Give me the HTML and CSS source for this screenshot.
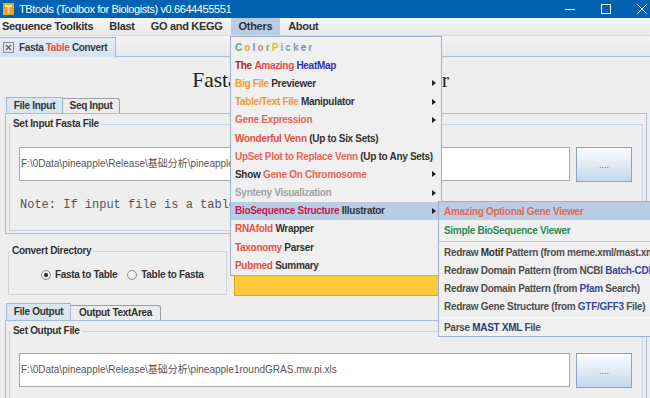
FILE: index.html
```html
<!DOCTYPE html>
<html lang="en">
<head>
  <meta charset="UTF-8" />
  <title>TBtools (Toolbox for Biologists) v0.6644455551</title>
  <link rel="stylesheet" href="styles.css">
</head>
<body>

  <div class="titlebar">
    <svg class="app-icon" width="11" height="12" viewBox="0 0 11 12">
      <rect x="0" y="0" width="11" height="12" fill="#f4a21e"/>
      <rect x="2" y="2" width="7" height="2" fill="#fde3a8"/>
      <rect x="4.5" y="2" width="2" height="8" fill="#fde3a8"/>
    </svg>
    <span class="app-title">TBtools (Toolbox for Biologists) v0.6644455551</span>
    <div class="win-controls">
      <span class="win-btn">
        <svg width="10" height="10" viewBox="0 0 10 10"><line x1="0" y1="5.5" x2="10" y2="5.5" stroke="#fff" stroke-width="1"/></svg>
      </span>
      <span class="win-btn">
        <svg width="10" height="10" viewBox="0 0 10 10"><rect x="0.5" y="0.5" width="9" height="9" fill="none" stroke="#fff" stroke-width="1"/></svg>
      </span>
      <span class="win-btn">
        <svg width="10" height="10" viewBox="0 0 10 10"><path d="M0.5 0.5 L9.5 9.5 M9.5 0.5 L0.5 9.5" stroke="#fff" stroke-width="1"/></svg>
      </span>
    </div>
  </div>

  <nav class="menubar">
    <span class="menu-item first">Sequence Toolkits</span>
    <span class="menu-item">Blast</span>
    <span class="menu-item">GO and KEGG</span>
    <span class="menu-item open">Others</span>
    <span class="menu-item">About</span>
  </nav>

  <div class="doc-tabs">
    <div class="doc-tab">
      <svg class="tab-close" width="11" height="11" viewBox="0 0 11 11">
        <rect x="0.5" y="0.5" width="10" height="10" fill="#e4e4e4" stroke="#8c8c8c"/>
        <path d="M3 3 L8 8 M8 3 L3 8" stroke="#606060" stroke-width="1.2"/>
      </svg>
      <span>Fasta <span class="c-red">Table</span> Convert</span>
    </div>
  </div>

  <main class="content">
    <h1 class="page-title">Fasta Table Format Converter</h1>

    <div class="tabbed">
      <div class="tab-row">
        <span class="tab active tab-input">File Input</span>
        <span class="tab tab-seq">Seq Input</span>
      </div>
      <div class="tab-panel input-panel">
        <fieldset class="titled input-box">
          <legend>Set Input Fasta File</legend>
          <div class="file-row">
            <div class="field">F:\0Data\pineapple\Release\基础分析\pineapple1roundGRAS.mw.pi.fa</div>
            <button class="browse">....</button>
          </div>
          <p class="note">Note: If input file is a table file,</p>
        </fieldset>
      </div>
    </div>

    <div class="convert-row">
      <fieldset class="titled direction">
        <legend>Convert Directory</legend>
        <div class="radios">
          <label class="radio"><span class="dot checked"></span>Fasta to Table</label>
          <label class="radio"><span class="dot"></span>Table to Fasta</label>
        </div>
      </fieldset>
      <div class="convert-btn"></div>
    </div>

    <div class="tabbed output">
      <div class="tab-row">
        <span class="tab active tab-file-out">File Output</span>
        <span class="tab tab-text-out">Output TextArea</span>
      </div>
      <div class="tab-panel output-panel">
        <fieldset class="titled output-box">
          <legend>Set Output File</legend>
          <div class="file-row">
            <div class="field">F:\0Data\pineapple\Release\基础分析\pineapple1roundGRAS.mw.pi.xls</div>
            <button class="browse">....</button>
          </div>
        </fieldset>
      </div>
    </div>
  </main>

  <!-- Others popup -->
  <div class="popup others-menu">
    <div class="pm-item colorpicker">
      <span style="color:#4fa896">C</span><span style="color:#eaa23c">o</span><span style="color:#6c93d2">l</span><span style="color:#e57c8c">o</span><span style="color:#6cb35c">r</span><span style="color:#d6bf38">P</span><span style="color:#c77dc2">i</span><span style="color:#69b0a0">c</span><span style="color:#8592b4">k</span><span style="color:#7d7fc4">e</span><span style="color:#8c9ca8">r</span>
    </div>
    <div class="pm-item"><span class="c-dred">The</span>&nbsp;<span class="c-pink">Amazing</span>&nbsp;<span class="c-blue">HeatMap</span></div>
    <div class="pm-item sub"><span class="c-orange">Big File</span>&nbsp;<span class="c-dark">Previewer</span></div>
    <div class="pm-item sub"><span class="c-orange">Table/Text File</span>&nbsp;<span class="c-dark">Manipulator</span></div>
    <div class="pm-item sub"><span class="c-salmon">Gene Expression</span></div>
    <div class="pm-item"><span class="c-red">Wonderful Venn</span>&nbsp;<span class="c-dark">(Up to Six Sets)</span></div>
    <div class="pm-item"><span class="c-salmon">UpSet Plot to Replace Venn</span>&nbsp;<span class="c-dark">(Up to Any Sets)</span></div>
    <div class="pm-item sub"><span class="c-dark">Show</span>&nbsp;<span class="c-salmon">Gene On Chromosome</span></div>
    <div class="pm-item sub"><span class="c-gray">Synteny Visualization</span></div>
    <div class="pm-item sub active"><span class="c-crimson">BioSequence Structure</span>&nbsp;<span class="c-dark">Illustrator</span></div>
    <div class="pm-item"><span class="c-red">RNAfold</span>&nbsp;<span class="c-dark">Wrapper</span></div>
    <div class="pm-item"><span class="c-red">Taxonomy</span>&nbsp;<span class="c-dark">Parser</span></div>
    <div class="pm-item"><span class="c-red">Pubmed</span>&nbsp;<span class="c-dark">Summary</span></div>
  </div>

  <!-- BioSequence submenu -->
  <div class="popup sub-menu">
    <div class="pm-item active"><span class="c-salmon">Amazing Optional Gene Viewer</span></div>
    <div class="pm-item tall"><span class="c-green">Simple BioSequence Viewer</span></div>
    <div class="pm-sep"></div>
    <div class="pm-item c-mid">Redraw&nbsp;<span class="c-dark">Motif</span>&nbsp;Pattern (from meme.xml/mast.xml)</div>
    <div class="pm-item c-mid">Redraw Domain Pattern (from NCBI&nbsp;<span class="c-navy">Batch-CDD</span>)</div>
    <div class="pm-item c-mid">Redraw Domain Pattern (from&nbsp;<span class="c-navy">Pfam</span>&nbsp;Search)</div>
    <div class="pm-item c-mid">Redraw Gene Structure (from&nbsp;<span class="c-navy">GTF/GFF3</span>&nbsp;File)</div>
    <div class="pm-sep low"></div>
    <div class="pm-item c-mid">Parse&nbsp;<span class="c-deep">MAST XML</span>&nbsp;File</div>
  </div>

</body>
</html>
```

FILE: styles.css
```css
* {
  box-sizing: border-box;
  margin: 0;
  padding: 0;
}
body {
  width: 650px;
  height: 398px;
  overflow: hidden;
  position: relative;
  background: #eeeeee;
  font-family: "Liberation Sans", Arial, "Noto Sans CJK SC", sans-serif;
  color: #333;
}

/* Title bar */
.titlebar {
  height: 18px;
  background: #0063b1;
  color: #fff;
  display: flex;
  align-items: center;
}
.app-icon {
  margin: 0 5px 0 3px;
}
.app-title {
  flex: 1;
  font-size: 11px;
  letter-spacing: -0.4px;
  white-space: nowrap;
}
.win-controls {
  display: flex;
  margin-right: -10px;
}
.win-btn {
  width: 36px;
  height: 18px;
  display: flex;
  align-items: center;
  justify-content: center;
}

/* Menu bar */
.menubar {
  height: 18px;
  display: flex;
  background: linear-gradient(#f6f6f6, #e9e9e9);
  border-bottom: 1px solid #d9d9d9;
}
.menu-item {
  padding: 0 8px;
  font-size: 11px;
  font-weight: bold;
  letter-spacing: -0.3px;
  line-height: 17px;
  color: #333;
  white-space: nowrap;
}
.menu-item.first {
  padding-left: 2px;
}
.menu-item.open {
  background: #b8cde3;
}

/* Document tabs */
.doc-tabs {
  height: 21px;
  display: flex;
  align-items: flex-end;
  background: linear-gradient(#f3f3f3, #e9e9e9);
  border-bottom: 1px solid #a9bfdb;
}
.doc-tab {
  width: 116px;
  height: 20px;
  margin-bottom: -1px;
  display: flex;
  align-items: center;
  gap: 5px;
  padding-left: 3px;
  background: linear-gradient(#e6eef7, #d5e2f0);
  border: 1px solid #a3b8d3;
  border-left: none;
  border-bottom: none;
  font-size: 10px;
  font-weight: bold;
  letter-spacing: -0.35px;
  color: #3a3a3a;
  white-space: nowrap;
}

/* Content */
.content {
  display: flex;
  flex-direction: column;
}
.page-title {
  margin: 10px 0 4px;
  padding-right: 9px;
  height: 26px;
  line-height: 26px;
  text-align: center;
  font-family: "Liberation Serif", "Times New Roman", serif;
  font-size: 21.5px;
  font-weight: normal;
  color: #222;
  white-space: nowrap;
}

.tabbed {
  margin: 0 3px 0 5px;
}
.tab-row {
  height: 16px;
  display: flex;
  align-items: flex-end;
  padding-left: 1px;
}
.tab {
  height: 16px;
  line-height: 15px;
  text-align: center;
  font-size: 10px;
  font-weight: bold;
  letter-spacing: -0.3px;
  color: #333;
  border: 1px solid #a0a0a0;
  border-bottom: none;
  background: #ececec;
  white-space: nowrap;
}
.tab.active {
  background: #dae5f2;
  border-color: #9fb6d4;
}
.tab + .tab {
  height: 15px;
  line-height: 14px;
  border-left: none;
  border-top-right-radius: 3px;
}
.tab-input { width: 57px; }
.tab-seq { width: 57px; }
.tab-file-out { width: 65px; }
.tab-text-out { width: 90px; }

.tab-panel {
  border: 1px solid #a7bcd9;
  padding: 4px 3px 0 3px;
}
.input-panel {
  height: 121px;
}
.output-panel {
  height: 78px;
  border-bottom: none;
}

.titled {
  border: 1px solid #c4d2e4;
  min-width: 0;
}
.titled legend {
  margin-left: 1px;
  padding: 0 2px;
  font-size: 10px;
  font-weight: bold;
  letter-spacing: -0.3px;
  line-height: 12px;
  color: #333;
}
.input-box {
  height: 113px;
}
.output-box {
  height: 73px;
  border-bottom: none;
}

.file-row {
  display: flex;
  gap: 6px;
  margin: 17px 10px 0 9px;
}
.output-box .file-row {
  margin-top: 16px;
}
.field {
  width: 552px;
  height: 34px;
  background: #fff;
  border: 1px solid #a9a9a9;
  padding-left: 1px;
  line-height: 32px;
  font-size: 10px;
  color: #555;
  white-space: nowrap;
  overflow: hidden;
}
.browse {
  width: 56px;
  height: 35px;
  border: 1px solid #8ea2bb;
  background: linear-gradient(#fbfdff, #c6d7ea);
  font-family: "Liberation Sans", Arial, sans-serif;
  font-size: 9px;
  color: #6a7280;
}
.note {
  margin: 15px 0 0 10px;
  font-family: "Liberation Mono", "Courier New", monospace;
  font-size: 12px;
  line-height: 16px;
  color: #555;
  white-space: nowrap;
  overflow: hidden;
}

/* Convert row */
.convert-row {
  display: flex;
  align-items: flex-start;
  gap: 7px;
  margin-top: 11px;
  padding-left: 8px;
}
.direction {
  width: 219px;
  height: 50px;
  border-color: #d4d4d4;
}
.radios {
  display: flex;
  gap: 10px;
  margin: 11px 0 0 32px;
}
.radio {
  display: flex;
  align-items: center;
  gap: 4px;
  font-size: 10px;
  font-weight: bold;
  letter-spacing: -0.3px;
  line-height: 14px;
  color: #333;
}
.dot {
  width: 10px;
  height: 10px;
  border-radius: 50%;
  border: 1px solid #8f8f8f;
  background: radial-gradient(circle at 40% 35%, #fff, #dcdcdc);
  display: flex;
  align-items: center;
  justify-content: center;
}
.dot.checked::after {
  content: "";
  width: 4px;
  height: 4px;
  border-radius: 50%;
  background: #222;
}
.convert-btn {
  width: 399px;
  height: 51px;
  background: #ffcb3a;
  border: 1px solid #d9a628;
}

.output {
  margin-top: 7px;
}
.output .tab-row {
  height: 17px;
}
.output .tab.active {
  height: 17px;
  line-height: 16px;
}

/* Popup menus */
.popup {
  position: absolute;
  background: #f0f0f0;
  border: 1px solid #9eb1cb;
  font-size: 10px;
  font-weight: bold;
  letter-spacing: -0.3px;
  white-space: nowrap;
  overflow: hidden;
}
.others-menu {
  left: 230px;
  top: 36px;
  width: 212px;
  padding: 1px 0;
}
.others-menu .pm-item {
  height: 18.2px;
}
.pm-item {
  height: 18px;
  display: flex;
  align-items: center;
  padding-left: 4px;
}
.pm-item.sub::after {
  content: "";
  margin-left: auto;
  margin-right: 5px;
  border-left: 4px solid #222;
  border-top: 3.5px solid transparent;
  border-bottom: 3.5px solid transparent;
}
.pm-item.active {
  background: #b8cde3;
}
.colorpicker {
  letter-spacing: 2.1px;
}

.sub-menu {
  left: 438px;
  top: 201px;
  width: 212px;
  border-right: none;
}
.sub-menu .pm-item {
  padding-left: 5px;
}
.sub-menu .pm-item.tall {
  height: 21px;
}
.pm-sep {
  height: 2px;
  border-top: 1px solid #c6c6c6;
  border-bottom: 1px solid #fbfbfb;
}
.pm-sep.low {
  height: 3px;
  border-top-width: 2px;
  border-top-color: #eeeeee;
  box-shadow: inset 0 -1px 0 #c6c6c6;
}

/* Text colours */
.c-red { color: #e4513f; }
.c-dred { color: #b42626; }
.c-pink { color: #e8484c; }
.c-blue { color: #2b30b6; }
.c-orange { color: #f29a2e; }
.c-salmon { color: #e6665a; }
.c-dark { color: #333; }
.c-gray { color: #a2a2a2; }
.c-crimson { color: #c61a4f; }
.c-green { color: #2f8a56; }
.c-mid { color: #4e4e4e; }
.c-navy { color: #3a48a0; }
.c-deep { color: #2f3b78; }
```
